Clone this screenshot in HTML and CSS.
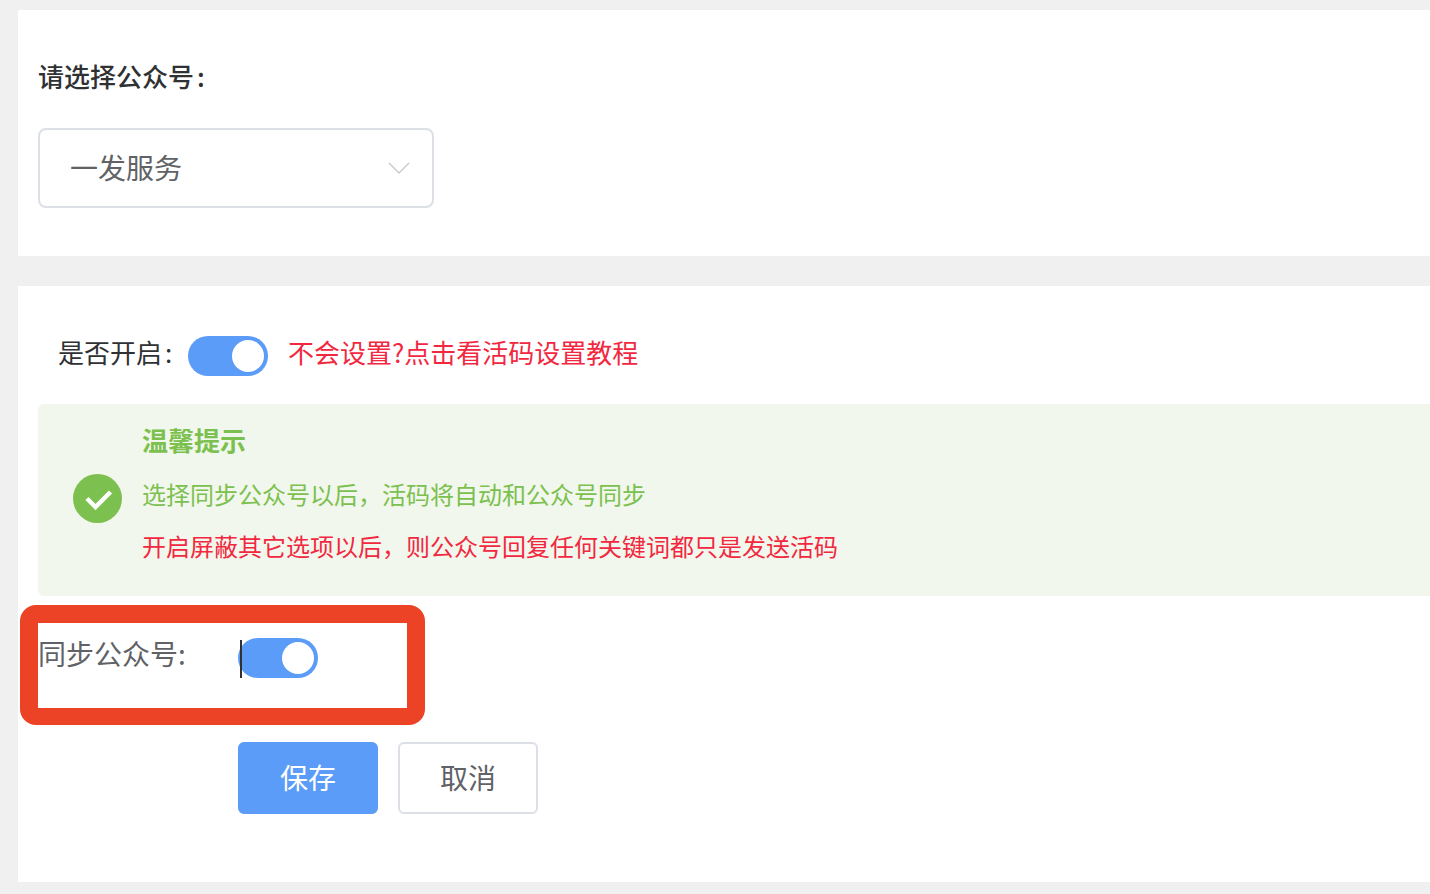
FILE: index.html
```html
<!DOCTYPE html>
<html lang="zh-CN">
<head>
    <meta charset="UTF-8">
    <meta name="viewport" content="width=device-width, initial-scale=1.0">
    <title>同步公众号</title>
    <link rel="stylesheet" href="styles.css">
</head>
<body>
    <div class="card card-select">
        <div class="select-label">请选择公众号<span class="colon">:</span></div>
        <div class="select-box">
            <span>一发服务</span>
            <svg class="select-arrow" width="22" height="14" viewBox="0 0 22 14">
                <path d="M1 2l10 10L21 2" fill="none" stroke="#c9ccd3" stroke-width="1.5"/>
            </svg>
        </div>
    </div>

    <div class="card card-form">
        <div class="open-row">
            <span class="open-label">是否开启<span class="colon">:</span></span>
            <span class="switch"></span>
            <span class="help-link">不会设置?点击看活码设置教程</span>
        </div>

        <div class="tip">
            <svg class="tip-icon" width="49" height="49" viewBox="0 0 49 49">
                <circle cx="24.5" cy="24.5" r="24.5" fill="#7cc04f"/>
                <path d="M14 24.5l8.5 8.5L37.5 18" fill="none" stroke="#fff" stroke-width="4.5"/>
            </svg>
            <div class="tip-text">
                <div class="tip-title">温馨提示</div>
                <div class="tip-line">选择同步公众号以后，活码将自动和公众号同步</div>
                <div class="tip-line tip-red">开启屏蔽其它选项以后，则公众号回复任何关键词都只是发送活码</div>
            </div>
        </div>

        <div class="sync-row">
            <span class="sync-label">同步公众号:</span>
            <span class="switch"></span>
            <span class="caret"></span>
            <span class="annotation"></span>
        </div>

        <div class="buttons">
            <button class="btn btn-primary">保存</button>
            <button class="btn">取消</button>
        </div>
    </div>
</body>
</html>
```

FILE: styles.css
```css
body {
    margin: 0;
    padding: 10px 0 0 18px;
    background-color: #f0f0f0;
    font-family: "Noto Sans CJK SC", "Liberation Sans", sans-serif;
    color: #606266;
}

.card {
    background: #fff;
    box-sizing: border-box;
    padding-left: 20px;
}

.colon {
    margin-left: 3px;
}

.card-select {
    height: 246px;
    padding-top: 47px;
    margin-bottom: 30px;
}

.select-label {
    height: 38px;
    line-height: 38px;
    font-size: 26px;
    font-weight: 500;
    color: #303133;
}

.select-box {
    display: flex;
    align-items: center;
    justify-content: space-between;
    box-sizing: border-box;
    width: 396px;
    height: 80px;
    margin-top: 33px;
    padding: 0 22px 2px 30px;
    border: 2px solid #dcdfe6;
    border-radius: 8px;
    font-size: 28px;
    color: #606266;
}

.select-arrow {
    margin-top: 2px;
}

.card-form {
    height: 596px;
    padding-top: 50px;
}

.open-row {
    display: flex;
    align-items: center;
    height: 40px;
    padding-left: 20px;
}

.open-label {
    width: 130px;
    padding-bottom: 10px;
    font-size: 26px;
    color: #303133;
}

.help-link {
    margin-left: 20px;
    padding-bottom: 10px;
    font-size: 26px;
    color: #f1283f;
}

.switch {
    display: block;
    position: relative;
    width: 80px;
    height: 40px;
    border-radius: 20px;
    background: #5b9cf8;
}

.switch::after {
    content: "";
    position: absolute;
    top: 4px;
    right: 4px;
    width: 32px;
    height: 32px;
    border-radius: 50%;
    background: #fff;
}

.tip {
    display: flex;
    align-items: center;
    box-sizing: border-box;
    height: 192px;
    margin-top: 28px;
    padding-left: 35px;
    background: #f1f7ec;
    border-radius: 6px 0 0 6px;
}

.tip-icon {
    flex: none;
    margin-right: 20px;
    margin-bottom: 3px;
}

.tip-text {
    align-self: flex-start;
    padding-top: 17px;
}

.tip-title {
    height: 38px;
    line-height: 38px;
    margin-bottom: 9px;
    font-size: 26px;
    font-weight: 700;
    color: #7cc04f;
}

.tip-line {
    height: 52px;
    line-height: 52px;
    font-size: 24px;
    color: #7cc04f;
}

.tip-red {
    color: #f1283f;
}

.sync-row {
    display: flex;
    position: relative;
    height: 128px;
    margin-top: 18px;
    padding-top: 24px;
    box-sizing: border-box;
}

.sync-label {
    width: 200px;
    height: 30px;
    line-height: 30px;
    font-size: 28px;
    color: #606266;
}

.caret {
    position: absolute;
    left: 202px;
    top: 26px;
    width: 2px;
    height: 38px;
    background: #303133;
}

.annotation {
    position: absolute;
    left: -18px;
    top: -9px;
    width: 405px;
    height: 120px;
    box-sizing: border-box;
    border: 18px solid #ec4226;
    border-bottom-width: 17px;
    border-radius: 16px;
}

.buttons {
    display: flex;
    gap: 20px;
    padding-left: 200px;
}

.btn {
    width: 140px;
    height: 72px;
    padding: 0 0 2px;
    border: 2px solid #dcdfe6;
    border-radius: 6px;
    background: #fff;
    font-family: inherit;
    font-size: 28px;
    color: #606266;
}

.btn-primary {
    border-color: #5b9cf8;
    background: #5b9cf8;
    color: #fff;
}
```
